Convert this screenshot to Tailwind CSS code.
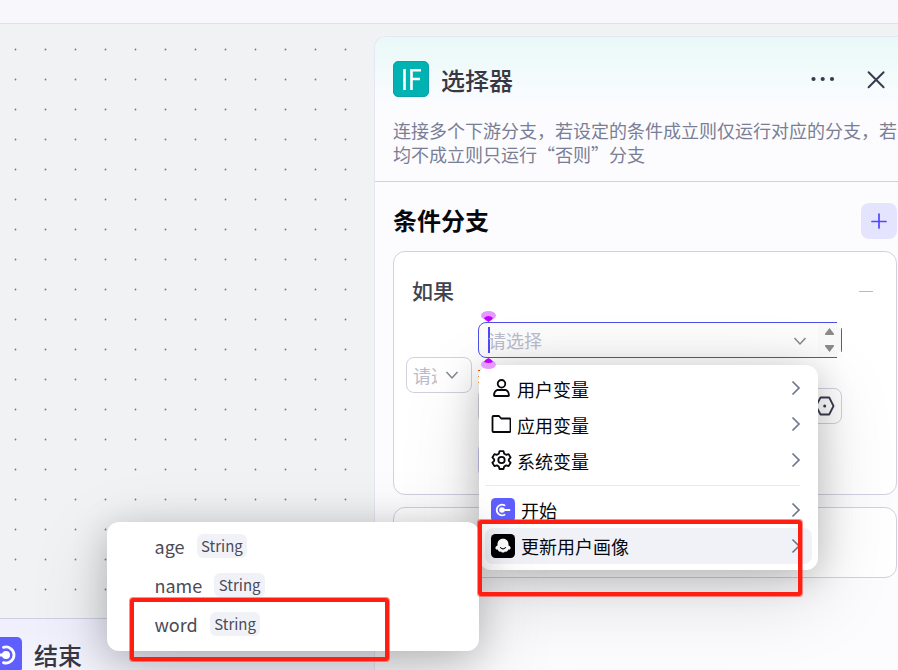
<!DOCTYPE html>
<html lang="zh-CN">
<head>
<meta charset="utf-8">
<title>选择器</title>
<script src="https://cdn.jsdelivr.net/npm/@tailwindcss/browser@4"></script>
</head>
<body class="relative h-[670px] w-[898px] overflow-hidden bg-[#f1f2f4] font-['Noto_Sans_CJK_SC',sans-serif] text-[#383743]">
  <div class="flex h-full flex-col">
    <header class="h-6 shrink-0 border-b border-[#dfe1ea] bg-[#f7f7fc]"></header>
    <div class="flex min-h-0 flex-1">
      <!-- Canvas with dot grid -->
      <main class="relative w-[374px] shrink-0 overflow-hidden">
        <svg class="absolute inset-0 h-full w-full">
          <defs>
            <pattern id="dots" width="30" height="30" patternUnits="userSpaceOnUse" y="10">
              <circle cx="15.5" cy="15.5" r="0.9" fill="#777980"/>
            </pattern>
          </defs>
          <rect width="375" height="646" fill="url(#dots)"/>
        </svg>
        <section class="absolute top-[594px] -left-5 flex h-20 w-[420px] items-start border-t border-[#cfcfe4] bg-linear-to-b from-[#efeffd] to-[#f8f8fd] pt-[18px] pl-1.5">
          <svg class="size-9 shrink-0" viewBox="0 0 36 36">
            <rect width="36" height="36" rx="5" fill="#5f5fff"/>
            <circle cx="20" cy="18" r="4" fill="#fff"/>
            <path d="M10 18h10M17.5 10.4a8 8 0 1 1 0 15.2" fill="none" stroke="#fff" stroke-width="2.8" stroke-linecap="round"/>
          </svg>
          <h2 class="ml-3 text-[24px] leading-9 font-medium">结束</h2>
        </section>
      </main>

      <!-- Settings panel -->
      <aside class="mt-3 flex w-[525px] shrink-0 flex-col rounded-tl-xl border-t border-l border-[#e6e5f2] bg-[#fcfcff]">
        <div class="h-[145px] shrink-0 rounded-tl-xl border-b border-[#d0d0df] bg-linear-to-b from-[#e9f9f8] from-0% to-[#fcfcff] to-50% pt-6 pl-[18px]">
          <div class="flex h-9 items-center">
            <svg class="size-9" viewBox="0 0 36 36">
              <rect x=".5" y=".5" width="35" height="35" rx="4.5" fill="#00b2b2" stroke="#08a2a8"/>
              <path d="M11.5 8v21M18.5 29V9.2H28M18.5 18H27" fill="none" stroke="#fff" stroke-width="2.6"/>
            </svg>
            <h1 class="ml-3 pt-0.5 text-[24px] leading-9 font-medium">选择器</h1>
            <svg class="ml-[297px] h-6 w-7" viewBox="0 0 28 24" fill="#383b4f">
              <circle cx="3.5" cy="12" r="2.1"/><circle cx="12.7" cy="12" r="2.1"/><circle cx="22" cy="12" r="2.1"/>
            </svg>
            <svg class="ml-[26px] size-6" viewBox="0 0 24 24">
              <path d="M4.6 5.300l15 15M19.600 5.300l-15 15" stroke="#383b4f" stroke-width="2" stroke-linecap="round"/>
            </svg>
          </div>
          <p class="mt-[21px] text-[18px] leading-6 whitespace-nowrap text-[#7a7e94]">连接多个下游分支，若设定的条件成立则仅运行对应的分支，若<br>均不成立则只运行“否则”分支</p>
        </div>
        <div class="flex flex-1 flex-col pt-[21px] pr-0.5 pl-[18px]">
          <div class="flex h-9 items-center justify-between">
            <h2 class="-mt-0.5 text-[24px] font-bold text-[#08080c]">条件分支</h2>
            <button class="grid size-9 place-items-center rounded-lg bg-[#e4e4ff]">
              <svg class="size-4" viewBox="0 0 16 16"><path d="M8 1v14M1 8.5h14" stroke="#5147ff" stroke-width="1.700" stroke-linecap="round"/></svg>
            </button>
          </div>
          <div class="mt-3 h-[244px] shrink-0 rounded-xl border border-[#d0d0df] bg-white pt-6">
            <div class="flex h-[30px] items-center justify-between pr-[23px] pl-[18px]">
              <h3 class="-mt-px text-[21px] font-medium text-[#42434e]">如果</h3>
              <span class="mt-px h-[1.5px] w-3.5 bg-[#b5b9ca]"></span>
            </div>
            <div class="mt-4 flex pl-3">
              <div class="mt-[35px] flex h-9 w-[66px] items-center rounded-lg border border-[#d0d0df] pl-1.5">
                <span class="w-6 overflow-hidden text-[18px] whitespace-nowrap text-[#babccb]">请选择</span>
                <svg class="ml-2 h-3 w-3.5" viewBox="0 0 14 12"><path d="M1.500 3l5.500 6 5.500-6" fill="none" stroke="#85868f" stroke-width="1.500"/></svg>
              </div>
              <div class="ml-1.5 w-[364px]">
                <div class="relative flex h-9 items-center rounded-lg border border-[#4e50e4] bg-[#fcfcfd] pl-[9px]">
                  <span class="h-[26px] w-0.5 bg-[#5147ff]"></span>
                  <span class="-ml-0.5 pt-px text-[18px] text-[#babccb]">请选择</span>
                  <svg class="mt-px ml-[251px] h-3 w-3.5" viewBox="0 0 14 12"><path d="M1.500 3l5.500 6 5.500-6" fill="none" stroke="#85868f" stroke-width="1.500"/></svg>
                  <div class="absolute -top-px right-0 h-9 w-[23px] border-y border-[#4e50e4] bg-[#f9f9f9]">
                    <svg class="absolute top-0 left-0 h-[34px] w-[22px]" viewBox="0 0 22 34" fill="#8b8b8b">
                      <path d="M11.500 5l4.500 5.700q.5 1.300-.8 1.300H7.800q-1.300 0-.8-1.300zM11.500 29l4.500-5.700q.5-1.300-.8-1.300H7.800q-1.300 0-.8 1.300z"/>
                    </svg>
                    <i class="absolute -top-px -right-0.5 h-1.5 w-1.5 bg-[#fdfdfd]"></i>
                    <i class="absolute -right-0.5 -bottom-px h-1.5 w-1.5 bg-[#fdfdfd]"></i>
                  </div>
                </div>
                <!-- Validation message edge, mostly under the menu -->
                <div class="mt-3 mb-[3px] flex h-[15px] w-0.5 flex-col gap-[5px]">
                  <i class="h-px bg-[#f54a00]"></i><i class="h-px bg-[#ff9b3d]"></i><i class="h-px bg-[#ff9b3d]"></i>
                </div>
                <div class="flex h-9 items-center justify-end rounded-lg border border-[#d0d0df] pr-1.5">
                  <svg class="size-5" viewBox="0 0 20 20"><path d="M5.500 1.500h8.700L18.500 10l-4.300 8.500H5.500L1 10z" fill="none" stroke="#383b4f" stroke-width="1.800" stroke-linejoin="round"/><circle cx="9.700" cy="10" r="1.500" fill="#383b4f"/></svg>
                </div>
                <div class="mt-[18px] h-9 w-[300px] rounded-lg border border-[#c8c8f0]"></div>
              </div>
            </div>
          </div>
          <div class="mt-3 h-[71px] shrink-0 rounded-xl border border-[#d0d0df] bg-white"></div>
        </div>
      </aside>
    </div>
  </div>

  <!-- Variable menu -->
  <nav class="absolute top-[365px] left-[479px] h-[205px] w-[339px] rounded-xl bg-white px-1.5 pt-1.5 text-[18px] text-[#08080c] shadow-[0_6px_36px_rgba(0,0,0,0.2),0_24px_80px_rgba(0,0,0,0.15)]">
    <div class="flex h-9 items-center pl-1.5">
      <svg class="mr-1.5 -mt-0.5 size-5" viewBox="0 0 20 20" fill="none" stroke="#08080c" stroke-width="1.800"><circle cx="10.500" cy="5.800" r="3.800"/><path d="M6 12h9q3 1.600 3 5.200 0 .8-.8.8H3.800q-.8 0-.8-.8Q3 13.600 6 12z" stroke-linejoin="round"/></svg>
      <span class="flex-1">用户变量</span>
      <svg class="mr-[11px] -mt-0.5 h-4 w-2.5" viewBox="0 0 10 16"><path d="M1.500 1.500L8 8l-6.500 6.500" fill="none" stroke="#70768c" stroke-width="1.700"/></svg>
    </div>
    <div class="flex h-9 items-center pl-1.5">
      <svg class="mr-1.5 -mt-0.5 size-5" viewBox="0 0 20 20" fill="none" stroke="#08080c" stroke-width="1.800"><path d="M1.500 3q0-1 1-1H8l2.200 2.500H18.500q1 0 1 1V17q0 1-1 1h-16q-1 0-1-1z" stroke-linejoin="round"/></svg>
      <span class="flex-1">应用变量</span>
      <svg class="mr-[11px] -mt-0.5 h-4 w-2.5" viewBox="0 0 10 16"><path d="M1.500 1.500L8 8l-6.500 6.500" fill="none" stroke="#70768c" stroke-width="1.700"/></svg>
    </div>
    <div class="flex h-9 items-center pl-1.5">
      <svg class="mr-1.5 -mt-0.5 size-5 overflow-visible" viewBox="-.5 0 20 20" fill="none" stroke="#08080c" stroke-width="1.800" stroke-linejoin="round"><path d="M8 1.200h4l.7 2.500 1.900 1.100 2.500-.7 2 3.400-1.800 1.900v1.400l1.800 1.900-2 3.400-2.500-.7-1.900 1.100-.7 2.500H8l-.7-2.500-1.900-1.100-2.500.7-2-3.400 1.800-1.900V9.400L.9 7.500l2-3.400 2.500.7 1.900-1.100z"/><circle cx="10" cy="10" r="3.200"/></svg>
      <span class="flex-1">系统变量</span>
      <svg class="mr-[11px] -mt-0.5 h-4 w-2.5" viewBox="0 0 10 16"><path d="M1.500 1.500L8 8l-6.500 6.500" fill="none" stroke="#70768c" stroke-width="1.700"/></svg>
    </div>
    <hr class="mt-1.5 mr-3 mb-1.5 border-[#e9e9ee]">
    <div class="flex h-9 items-center pl-1.5">
      <svg class="mr-1.5 size-6" viewBox="0 0 24 24"><rect width="24" height="24" rx="4.500" fill="#5f5fff"/><circle cx="11" cy="12" r="2.800" fill="#fff"/><path d="M11 12h7.500M13.500 7.300a5.300 5.300 0 1 0 0 9.400" fill="none" stroke="#fff" stroke-width="1.800" stroke-linecap="round"/></svg>
      <span class="flex-1">开始</span>
      <svg class="mr-[11px] h-4 w-2.5" viewBox="0 0 10 16"><path d="M1.500 1.500L8 8l-6.500 6.500" fill="none" stroke="#70768c" stroke-width="1.700"/></svg>
    </div>
    <div class="flex h-9 items-center rounded-lg bg-[#f1f2f8] pl-1.5">
      <svg class="mr-1.5 size-6" viewBox="0 0 24 24"><rect width="24" height="24" rx="4.500" fill="#000"/><path d="M12 4.700c3.700 0 5.500 2.500 5.500 5.500v1.300c2 .7 2.400 2.300 1.900 3.300-.5.900-1.300 1-2.200.8-.4 1.900-1.700 2.700-3.200 1.800-1.100 1.600-2.900 1.600-4 0-1.500.9-2.800.1-3.200-1.800-.9.200-1.700.1-2.200-.8-.5-1-.1-2.600 1.900-3.300v-1.300c0-3 1.800-5.500 5.500-5.500z" fill="#fff"/><path d="M9.500 13.500q2.500 2.700 5 0" fill="none" stroke="#000" stroke-width="1.100" stroke-linecap="round"/></svg>
      <span class="flex-1">更新用户画像</span>
      <svg class="mr-[11px] h-4 w-2.5" viewBox="0 0 10 16"><path d="M1.500 1.500L8 8l-6.500 6.500" fill="none" stroke="#70768c" stroke-width="1.700"/></svg>
    </div>
  </nav>

  <!-- Drop position marks -->
  <svg class="absolute top-[310px] left-[480px] h-[61px] w-4" viewBox="0 0 16 61">
    <ellipse cx="8.500" cy="5.500" rx="7.500" ry="4.500" fill="#e59aff"/>
    <path d="M4 8q4.500-4 9 0q-1 2.300-4.500 4Q5 10.300 4 8z" fill="#bf00ff"/>
    <ellipse cx="8.500" cy="54.500" rx="7.500" ry="4.500" fill="#e59aff"/>
    <path d="M4 52q4.500 2 9 0q-1-2.300-4.500-4Q5 49.700 4 52z" fill="#bf00ff"/>
  </svg>

  <!-- Submenu of output fields -->
  <div class="absolute top-[522px] left-[107px] h-[129px] w-[372px] rounded-xl bg-white pt-[5px] pl-[47.500px] text-[18px] text-[#4a4b57] shadow-[0_6px_36px_rgba(0,0,0,0.2),0_24px_80px_rgba(0,0,0,0.15)]">
    <div class="flex h-[39px] items-center"><span>age</span><span class="-mt-0.5 ml-3 h-6 rounded-md bg-[#f1f2f8] px-[4.500px] text-[15px] leading-6">String</span></div>
    <div class="flex h-[39px] items-center"><span>name</span><span class="-mt-0.5 ml-3 h-6 rounded-md bg-[#f1f2f8] px-[4.500px] text-[15px] leading-6">String</span></div>
    <div class="flex h-[39px] items-center"><span>word</span><span class="-mt-0.5 ml-3 h-6 rounded-md bg-[#f1f2f8] px-[4.500px] text-[15px] leading-6">String</span></div>
  </div>

  <!-- Highlight frames -->
  <div class="absolute top-[520px] left-[478px] h-[76px] w-[324px] rounded-[3px] border-4 border-[#ff1f12] ring-1 ring-[#ff1f12]/50"></div>
  <div class="absolute top-[598px] left-[130px] h-[63px] w-[259px] rounded-[3px] border-4 border-[#ff1f12] ring-1 ring-[#ff1f12]/50"></div>
</body>
</html>
